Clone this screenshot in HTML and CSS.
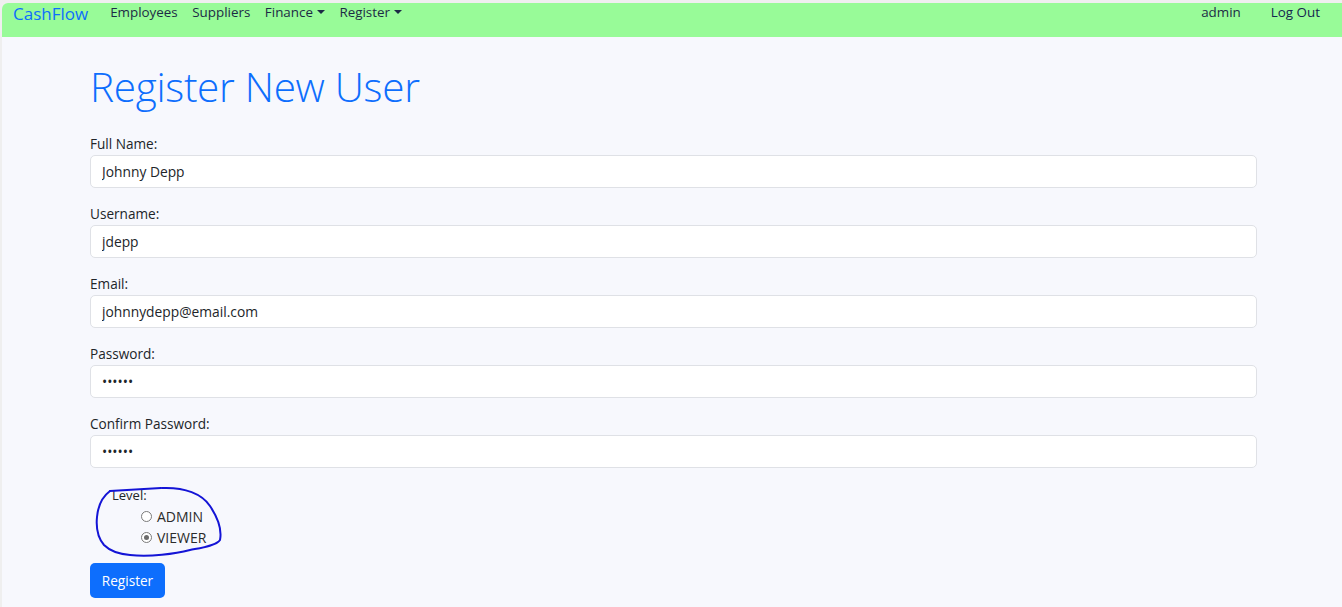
FILE: index.html
```html
<!DOCTYPE html>
<html lang="en">
<head>
<meta charset="utf-8">
<title>Register New User</title>
<link rel="stylesheet" href="styles.css">
</head>
<body>
<div class="frame">
  <nav class="navbar">
    <a class="brand" href="#">CashFlow</a>
    <ul class="nav-left">
      <li><a href="#">Employees</a></li>
      <li><a href="#">Suppliers</a></li>
      <li><a href="#" class="dropdown">Finance</a></li>
      <li><a href="#" class="dropdown">Register</a></li>
    </ul>
    <ul class="nav-right">
      <li><span class="user">admin</span></li>
      <li><a href="#" class="logout">Log Out</a></li>
    </ul>
  </nav>
  <main class="main">
    <h1 class="title">Register New User</h1>
    <form class="form">
      <div class="group">
        <label class="label">Full Name:</label>
        <input class="control" type="text" value="Johnny Depp">
      </div>
      <div class="group">
        <label class="label">Username:</label>
        <input class="control" type="text" value="jdepp">
      </div>
      <div class="group">
        <label class="label">Email:</label>
        <input class="control" type="text" value="johnnydepp@email.com">
      </div>
      <div class="group">
        <label class="label">Password:</label>
        <input class="control" type="password" value="secret">
      </div>
      <div class="group">
        <label class="label">Confirm Password:</label>
        <input class="control" type="password" value="secret">
      </div>
      <div class="level">
        <div class="level-label">Level:</div>
        <label class="radio-row"><input type="radio" name="level" class="radio"> ADMIN</label>
        <label class="radio-row"><input type="radio" name="level" class="radio" checked> VIEWER</label>
        <svg class="scribble" width="140" height="84" viewBox="0 0 140 84">
          <path d="M20 9 L71 6" />
          <path d="M72 6 C95 5 112 12 120 24 C128 36 132 48 130 58 C126 64 110 66 100 68 C85 72 60 75 40 73 C28 72 20 69 14 63 C8 56 6 45 7 35 C8 24 12 15 20 9" />
        </svg>
      </div>
      <button type="button" class="btn">Register</button>
    </form>
  </main>
</div>
</body>
</html>
```
FILE: styles.css
```css
html, body {
  margin: 0;
  padding: 0;
  background: #efefef;
  height: 100%;
}
body {
  font-family: "Open Sans", "Noto Sans", sans-serif;
  color: #212529;
  overflow: hidden;
}
.frame {
  margin: 3px 0 0 2px;
  background: #f7f8fd;
  border-top-left-radius: 6px;
  min-height: 604px;
}
.navbar {
  display: flex;
  align-items: flex-start;
  height: 34px;
  box-sizing: border-box;
  padding: 0 22px 0 11px;
  background: #98fb98;
  border-top-left-radius: 6px;
}
.navbar ul {
  list-style: none;
  margin: 0;
  padding: 0;
  display: flex;
}
.navbar a, .navbar span {
  text-decoration: none;
  color: #1c2b45;
  font-size: 13.4px;
  line-height: 19px;
  display: block;
}
.navbar .brand {
  color: #0d6efd;
  font-size: 17px;
  line-height: 21px;
  margin-right: 22px;
}
.nav-left li { margin-right: 14.5px; }
.dropdown::after {
  content: "";
  display: inline-block;
  margin-left: 4px;
  vertical-align: 3px;
  border-top: 4px solid currentColor;
  border-left: 4px solid transparent;
  border-right: 4px solid transparent;
}
.navbar .nav-right { margin-left: auto; }
.user { margin-right: 30px; }
.navbar .logout { color: #13264f; }
.main {
  padding: 0 85px 0 88px;
}
.title {
  margin: 26px 0 0 0;
  font-size: 40.5px;
  font-weight: 300;
  line-height: 48px;
  color: #0d6efd;
  letter-spacing: -0.3px;
}
.form {
  margin-top: 23px;
  display: flex;
  flex-direction: column;
}
.group {
  display: flex;
  flex-direction: column;
  margin-bottom: 16px;
}
.label {
  font-size: 13.6px;
  line-height: 20px;
  margin-bottom: 1px;
}
.control {
  height: 33px;
  box-sizing: border-box;
  border: 1px solid #dfe1e6;
  border-radius: 5px;
  background: #fff;
  padding: 0 11px;
  font-family: inherit;
  font-size: 13.8px;
  color: #212529;
  outline: none;
}
.level {
  position: relative;
  padding: 1px 0 0 22px;
  height: 72px;
}
.level-label {
  font-size: 13px;
  line-height: 21px;
}
.radio-row {
  display: flex;
  align-items: center;
  margin-left: 29px;
  font-size: 14px;
  line-height: 21px;
  color: #2b2b2b;
}
.radio {
  appearance: none;
  -webkit-appearance: none;
  width: 11px;
  height: 11px;
  margin: 0 5px 0 0;
  border: 1px solid #7a7a7a;
  border-radius: 50%;
  box-sizing: border-box;
  background: #fff;
  position: relative;
}
.radio:checked::after {
  content: "";
  position: absolute;
  left: 2px;
  top: 2px;
  width: 5px;
  height: 5px;
  border-radius: 50%;
  background: #6b6b6b;
}
.scribble {
  position: absolute;
  left: 0;
  top: -2px;
  overflow: visible;
}
.scribble path {
  fill: none;
  stroke: #1414d6;
  stroke-width: 2;
  stroke-linecap: round;
}
.btn {
  align-self: flex-start;
  margin-top: 6px;
  width: 75px;
  height: 35px;
  border: none;
  border-radius: 5px;
  background: #0d6efd;
  color: #fff;
  font-family: inherit;
  font-size: 13.6px;
  padding: 0;
}
```
